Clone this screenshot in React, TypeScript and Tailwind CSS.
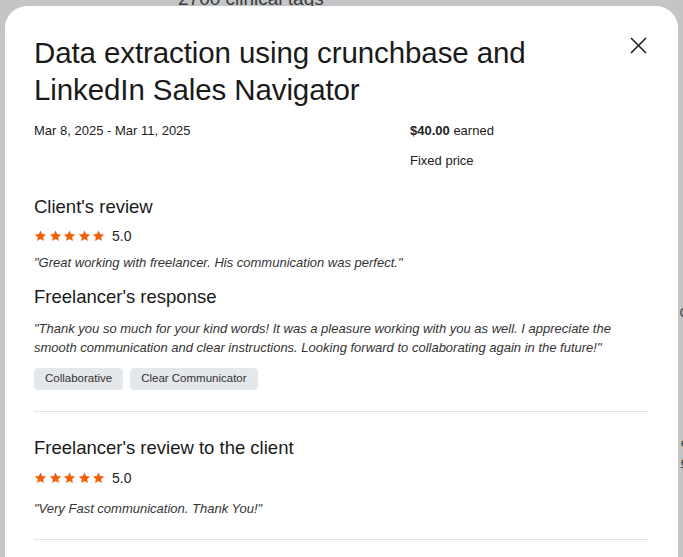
import React from "react";

function Star() {
  return (
    <svg width="13" height="12" viewBox="0 0 24 23" className="shrink-0">
      <path
        d="M12 0.8l3.1 7.1 7.7.7-5.8 5.1 1.7 7.6L12 17.3l-6.7 4 1.7-7.6L1.2 8.6l7.7-.7z"
        fill="#f2600c"
      />
    </svg>
  );
}

function Rating() {
  return (
    <div className="flex items-center gap-[7px]">
      <div className="flex items-center gap-[1.5px]">
        <Star />
        <Star />
        <Star />
        <Star />
        <Star />
      </div>
      <span className="text-[14px] leading-none text-[#222]">5.0</span>
    </div>
  );
}

export default function App() {
  return (
    <div
      className="relative h-[557px] w-[683px] overflow-hidden bg-[#c4c5c6]"
      style={{ fontFamily: '"Liberation Sans", Arial, sans-serif' }}
    >
      {/* dimmed page behind */}
      <div className="pl-[178px] -mt-[12px] text-[19px] leading-[22px] text-[#3b3c3e]">
        2700 clinical tags
      </div>
      <div className="flex flex-col items-end pt-[293px] text-[13px] text-[#3b3c3e]">
        <span className="-mr-[6px]">C</span>
        <span className="mt-[110px] -mr-[5px]">e</span>
        <span className="-mr-[5px] underline">e</span>
      </div>

      {/* modal */}
      <div className="absolute left-[5px] top-[6px] h-[600px] w-[673px] rounded-[22px] bg-white pl-[29px] pr-[29px] pt-[28px] text-[#1f1f1f]">
        <div className="flex items-start justify-between">
          <h1 className="w-[560px] text-[29.5px] leading-[37px] font-normal tracking-[-0.1px] text-[#1a1a1a]">
            Data extraction using crunchbase and LinkedIn Sales Navigator
          </h1>
          <button className="mt-[1px] p-[2px]" aria-label="Close">
            <svg width="17" height="17" viewBox="0 0 17 17">
              <path d="M1 1L16 16M16 1L1 16" stroke="#222" strokeWidth="1.6" />
            </svg>
          </button>
        </div>

        <div className="mt-[15px] grid grid-cols-[376px_1fr] text-[13px] leading-[16px]">
          <div className="text-[#222]">Mar 8, 2025 - Mar 11, 2025</div>
          <div className="flex flex-col gap-[14px] text-[#222]">
            <div>
              <span className="font-bold">$40.00</span> earned
            </div>
            <div>Fixed price</div>
          </div>
        </div>

        <h2 className="mt-[27px] text-[18.5px] leading-[22px] text-[#1a1a1a]">Client's review</h2>
        <div className="mt-[11px]">
          <Rating />
        </div>
        <p className="mt-[12px] text-[13px] leading-[16px] italic text-[#333]">
          "Great working with freelancer. His communication was perfect."
        </p>

        <h2 className="mt-[15px] text-[18.5px] leading-[22px] text-[#1a1a1a]">Freelancer's response</h2>
        <p className="mt-[11px] w-[590px] text-[13px] leading-[19px] italic text-[#333]">
          "Thank you so much for your kind words! It was a pleasure working with you as well. I appreciate the
          smooth communication and clear instructions. Looking forward to collaborating again in the future!"
        </p>
        <div className="mt-[11px] flex gap-[7px]">
          <span className="flex h-[22px] items-center rounded-[4px] bg-[#e4e7eb] px-[11px] text-[11.5px] text-[#333]">
            Collaborative
          </span>
          <span className="flex h-[22px] items-center rounded-[4px] bg-[#e4e7eb] px-[11px] text-[11.5px] text-[#333]">
            Clear Communicator
          </span>
        </div>

        <div className="mt-[21px] h-px w-[615px] bg-[#e2e3e6]" />

        <h2 className="mt-[25px] text-[18.5px] leading-[22px] text-[#1a1a1a]">
          Freelancer's review to the client
        </h2>
        <div className="mt-[12px]">
          <Rating />
        </div>
        <p className="mt-[16px] text-[13px] leading-[16px] italic text-[#333]">
          "Very Fast communication. Thank You!"
        </p>
        <div className="mt-[22px] h-px w-[615px] bg-[#e2e3e6]" />
      </div>
    </div>
  );
}
